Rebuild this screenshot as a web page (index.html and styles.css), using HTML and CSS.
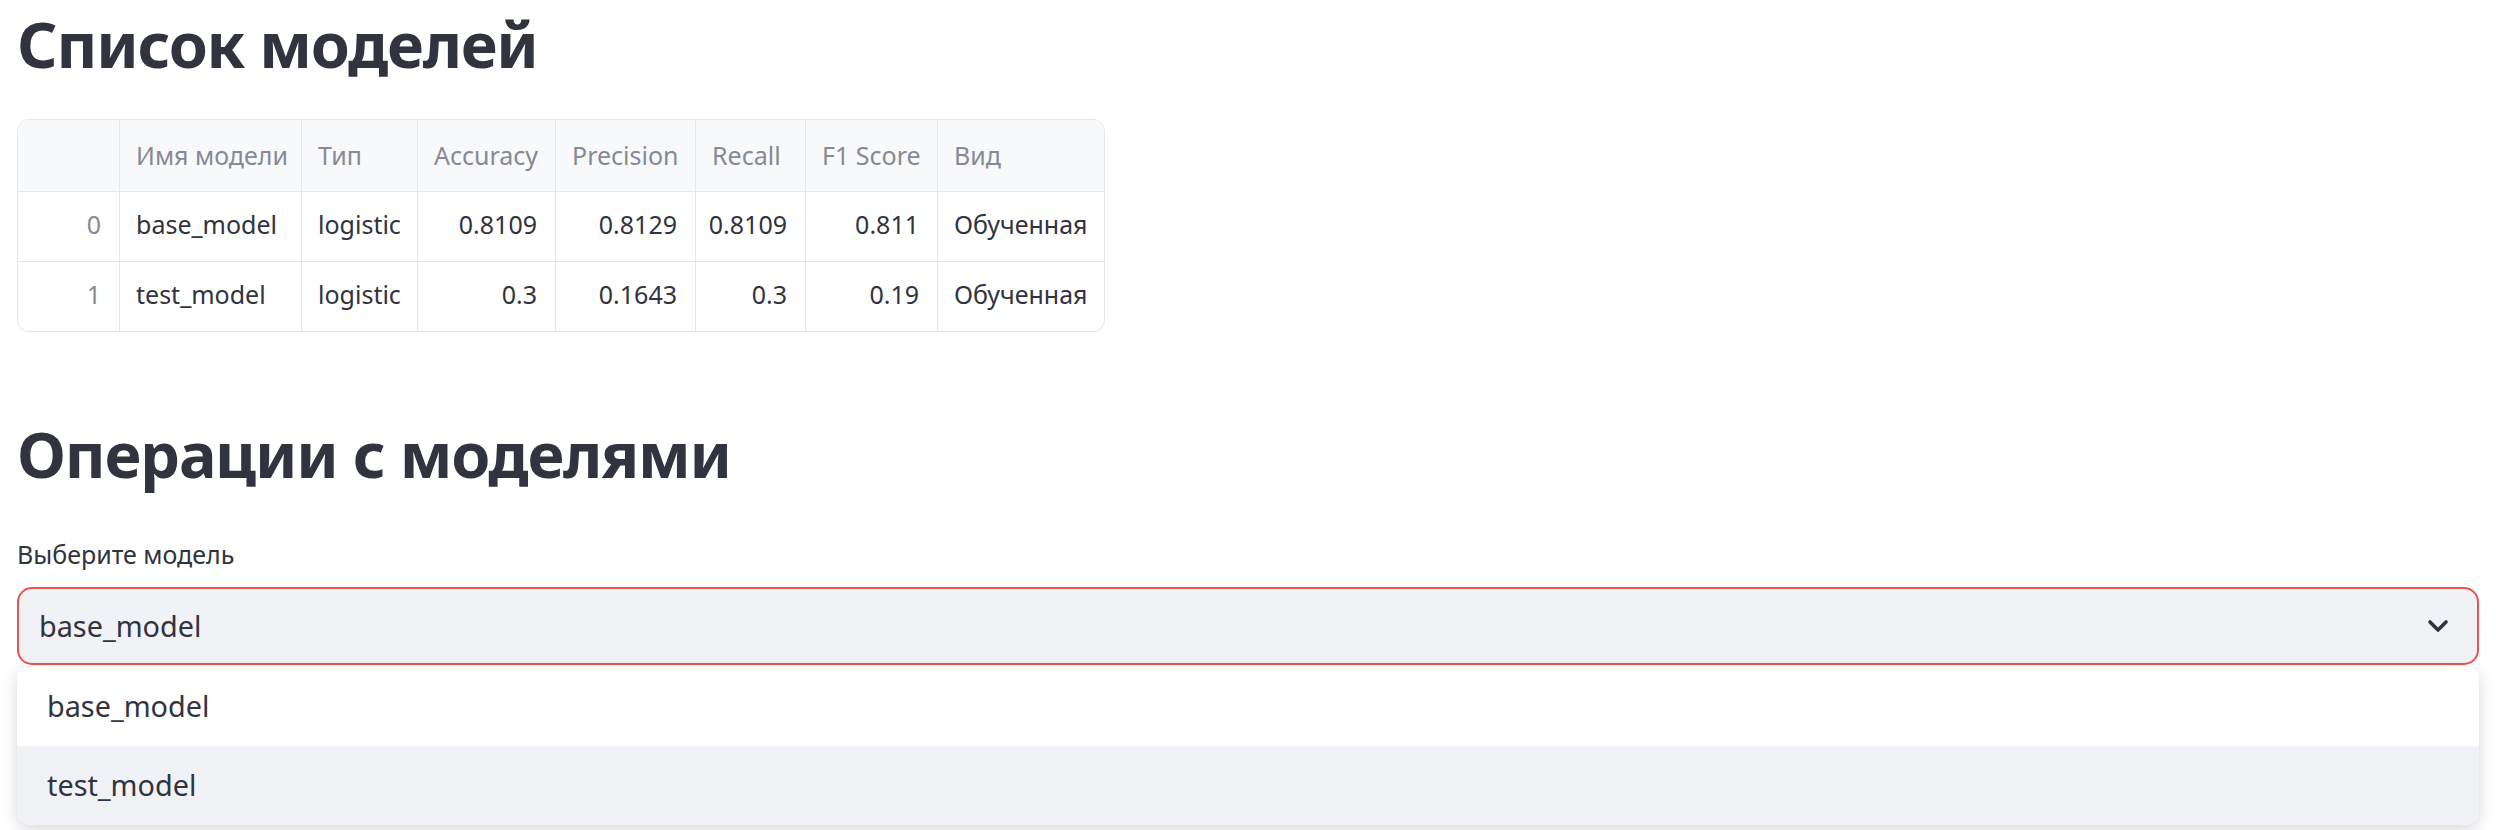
FILE: index.html
```html
<!DOCTYPE html>
<html lang="ru">
<head>
<meta charset="utf-8">
<title>Модели</title>
<link rel="stylesheet" href="styles.css">
</head>
<body>
<main class="page">
  <h1 class="title title-first">Список моделей</h1>

  <div class="grid-wrap">
    <div class="grid">
      <div class="cell head idx"></div>
      <div class="cell head">Имя модели</div>
      <div class="cell head">Тип</div>
      <div class="cell head">Accuracy</div>
      <div class="cell head">Precision</div>
      <div class="cell head">Recall</div>
      <div class="cell head">F1 Score</div>
      <div class="cell head last">Вид</div>

      <div class="cell body num idx">0</div>
      <div class="cell body">base_model</div>
      <div class="cell body">logistic</div>
      <div class="cell body num">0.8109</div>
      <div class="cell body num">0.8129</div>
      <div class="cell body num">0.8109</div>
      <div class="cell body num">0.811</div>
      <div class="cell body last">Обученная</div>

      <div class="cell body num idx final">1</div>
      <div class="cell body final">test_model</div>
      <div class="cell body final">logistic</div>
      <div class="cell body num final">0.3</div>
      <div class="cell body num final">0.1643</div>
      <div class="cell body num final">0.3</div>
      <div class="cell body num final">0.19</div>
      <div class="cell body last final">Обученная</div>
    </div>
  </div>

  <h1 class="title title-second">Операции с моделями</h1>

  <div class="field">
    <label class="field-label">Выберите модель</label>
    <div class="select-wrap">
      <div class="select">
        <span class="select-value">base_model</span>
        <svg class="chevron" width="22" height="14" viewBox="0 0 22 14" aria-hidden="true">
          <polyline points="3,3 11,11 19,3" fill="none" stroke="#31333F" stroke-width="3.6" stroke-linecap="round" stroke-linejoin="round"/>
        </svg>
      </div>
      <ul class="menu">
        <li class="option">base_model</li>
        <li class="option option-active">test_model</li>
      </ul>
    </div>
  </div>
</main>
</body>
</html>
```

FILE: styles.css
```css
html {
  height: 100%;
}

body {
  margin: 0;
  padding: 0;
  min-height: 830px;
  height: 100%;
  background: #ffffff;
  font-family: "Noto Sans", "Open Sans", sans-serif;
  color: #31333F;
}

.page {
  padding: 0 17px;
  min-height: 830px;
  box-sizing: border-box;
}

.title {
  font-family: "Noto Sans", sans-serif;
  font-weight: 700;
  font-size: 63px;
  line-height: 80px;
  letter-spacing: -1.2px;
  margin: 0;
  color: #31333F;
}

.title-first {
  padding-top: 4px;
}

.title-second {
  margin-top: 82px;
}

.grid-wrap {
  margin-top: 35px;
  width: 1086px;
  border: 1px solid #E6E7EA;
  border-radius: 12px;
  overflow: hidden;
}

.grid {
  display: grid;
  grid-template-columns: 102px 182px 116px 138px 140px 110px 132px 166px;
  grid-template-rows: 72px 70px 69px;
}

.cell {
  box-sizing: border-box;
  display: flex;
  align-items: center;
  padding: 0 16px;
  font-size: 25px;
  line-height: 34px;
  border-right: 1px solid #E6E7EA;
  border-bottom: 1px solid #E6E7EA;
  white-space: nowrap;
  overflow: hidden;
}

.cell.last {
  border-right: none;
}

.cell.final {
  border-bottom: none;
}

.head {
  background: #F8F9FB;
  color: #878993;
  padding-bottom: 2px;
}

.body {
  color: #31333F;
  padding-bottom: 6px;
}

.num {
  justify-content: flex-end;
  padding-right: 18px;
}

.body.idx {
  color: #878993;
}

.field {
  margin-top: 43px;
}

.field-label {
  display: block;
  font-size: 25px;
  line-height: 34px;
  color: #31333F;
}

.select-wrap {
  position: relative;
  margin-top: 16px;
}

.select {
  box-sizing: border-box;
  height: 78px;
  border: 2px solid #E8564F;
  border-radius: 15px;
  background: #F0F2F6;
  display: flex;
  align-items: center;
  justify-content: space-between;
  padding: 0 28px 0 20px;
}

.select-value {
  font-size: 28.8px;
  line-height: 40px;
}

.chevron {
  display: block;
}

.menu {
  position: absolute;
  left: 0;
  right: 0;
  top: 80px;
  z-index: 5;
  margin: 0;
  padding: 0;
  list-style: none;
  background: #ffffff;
  border-radius: 12px 12px 14px 14px;
  box-shadow: 0 4px 16px rgba(0, 0, 0, 0.16);
  overflow: hidden;
}

.option {
  box-sizing: border-box;
  height: 79px;
  display: flex;
  align-items: center;
  padding: 0 30px 2px;
  font-size: 28.8px;
  line-height: 40px;
  color: #31333F;
}

.option-active {
  background: #F0F2F6;
}
```
